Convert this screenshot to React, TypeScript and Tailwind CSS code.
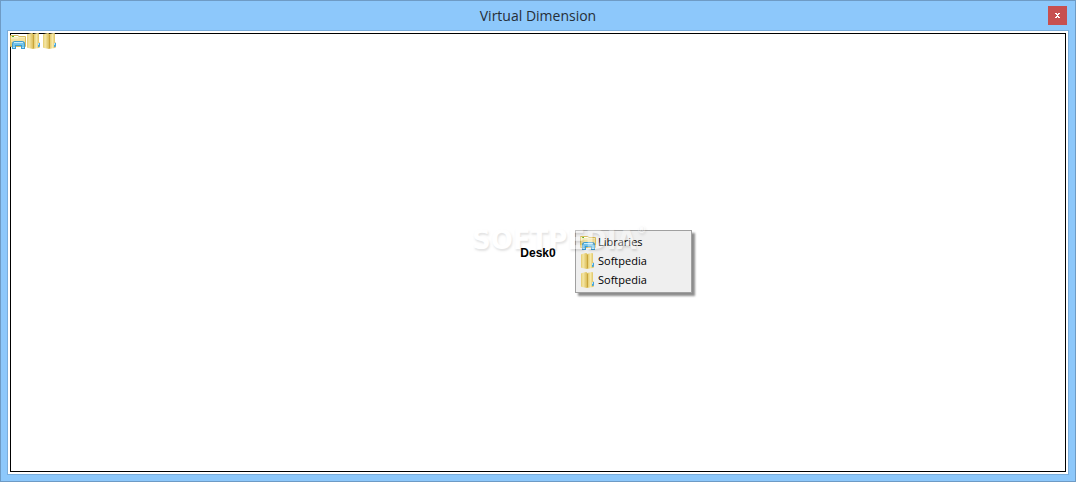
import React from "react";

type IconKind = "libraries" | "folder";

interface DesktopWindow {
  id: number;
  title: string;
  icon: IconKind;
}

const windows: DesktopWindow[] = [
  { id: 1, title: "Libraries", icon: "libraries" },
  { id: 2, title: "Softpedia", icon: "folder" },
  { id: 3, title: "Softpedia", icon: "folder" },
];

const LibrariesIcon: React.FC = () => (
  <svg viewBox="0 0 16 16" className="h-4 w-4 shrink-0" aria-hidden="true">
    <path d="M0 3q0-1 1-1h7l1 1h6q1 0 1 1v9q0 1-1 1H1q-1 0-1-1z" fill="#d9bd5c" />
    <path d="M1 3h7l1 1h6v2H1z" fill="#f5edbd" />
    <path d="M2 3h2v1H2z" fill="#4fb42b" />
    <path d="M4 3h4v1H4z" fill="#fffef0" />
    <path d="M1 6h7l1-1h6v8H1z" fill="#f3e2a0" />
    <path d="M1 9h14v4H1z" fill="#e8cf7a" />
    <path d="M2 16v-5q0-3 3-3h7q3 0 3 3v5h-4v-3H6v3z" fill="#3d9bd0" />
    <path d="M3 15v-4q0-2 2-2h7q2 0 2 2v4h-2v-3H5v3z" fill="#74c4ea" />
    <path d="M4 9h9v1H4z" fill="#c9edfb" />
    <path d="M3 14h2v1H3zM12 14h2v1h-2z" fill="#a9e2fa" />
  </svg>
);

const FolderIcon: React.FC = () => (
  <svg viewBox="0 0 16 16" className="h-4 w-4 shrink-0" aria-hidden="true">
    <defs>
      <linearGradient id="folder-back" x1="0" x2="1" y1="0" y2="0">
        <stop offset="0" stopColor="#dfc25c" />
        <stop offset="0.5" stopColor="#f6e9a8" />
        <stop offset="1" stopColor="#d6b64c" />
      </linearGradient>
      <linearGradient id="folder-front" x1="0" x2="1" y1="0" y2="0">
        <stop offset="0" stopColor="#e4ca6c" />
        <stop offset="0.3" stopColor="#f5e7a6" />
        <stop offset="1" stopColor="#d4b347" />
      </linearGradient>
    </defs>
    <path d="M7 1l5-1q1 0 1 1v8l1 1v4l-1 1-6 1z" fill="url(#folder-back)" />
    <path d="M1 2q0-1 1-1l4-1q1 0 1 1l1 1v13l-1 1-5-1q-1 0-1-1z" fill="url(#folder-front)" />
    <path d="M7 2h1v13H7z" fill="#c8a43a" />
    <path d="M12 10h2v3l-1 1h-1z" fill="#46a6dd" />
    <path d="M12 10h1v2h-1z" fill="#b4e2f6" />
  </svg>
);

const WindowIcon: React.FC<{ kind: IconKind }> = ({ kind }) =>
  kind === "libraries" ? <LibrariesIcon /> : <FolderIcon />;

const App: React.FC = () => {
  return (
    <div className="flex min-h-screen flex-col border border-[#6e9bc5] bg-[#8dc8fb] px-1.5 pb-1.5">
      <header className="grid h-[29px] grid-cols-[1fr_auto_1fr] items-center">
        <h1 className="col-start-2 font-['Open_Sans','Noto_Sans',sans-serif] text-[14px] leading-5 text-[#262f38]">
          Virtual Dimension
        </h1>
        <button
          type="button"
          aria-label="Close"
          className="mr-0.5 flex h-[19px] w-[19px] items-center justify-center justify-self-end bg-[#c75050]"
        >
          <svg viewBox="0 0 5 5" className="h-[5px] w-[5px]" shapeRendering="crispEdges" aria-hidden="true">
            <path d="M0 0h2v1h1V0h2v1H4v1H3v1h1v1h1v1H3V4H2v1H0V4h1V3h1V2H1V1H0z" fill="#fff" />
          </svg>
        </button>
      </header>

      <main className="flex flex-1 border border-[#7aaddb] bg-white p-0.5">
        <section className="relative flex flex-1 items-center justify-center border border-black">
          <div className="absolute -top-px -left-px flex">
            {windows.map((win) => (
              <button key={win.id} type="button" aria-label={win.title}>
                <WindowIcon kind={win.icon} />
              </button>
            ))}
          </div>

          <h2 className="font-['Liberation_Sans',Arial,sans-serif] text-[12px] leading-4 font-bold text-black">
            Desk0
          </h2>

          <ul className="absolute top-[calc(50%-23px)] left-[calc(50%+37px)] w-[117px] border border-[#a0a0a0] bg-[#efefef] py-0.5 shadow-[3px_3px_2px_rgba(0,0,0,0.45)]">
            {windows.map((win) => (
              <li key={win.id}>
                <button
                  type="button"
                  className="flex h-[19px] w-full items-center gap-0.5 px-1 text-left font-['Open_Sans','Noto_Sans',sans-serif] text-[11px] leading-4 text-black"
                >
                  <WindowIcon kind={win.icon} />
                  {win.title}
                </button>
              </li>
            ))}
          </ul>

          {/* watermark, sits above the menu but lets clicks through */}
          <div className="pointer-events-none absolute top-[calc(50%-29px)] left-[calc(50%-66px)] flex items-start font-['DejaVu_Sans',sans-serif] text-[26px] leading-8 font-bold text-white opacity-35 [text-shadow:1px_2px_2px_rgba(0,0,0,0.3)]">
            SOFTPEDIA
            <span className="text-[10px] leading-3">®</span>
          </div>
        </section>
      </main>
    </div>
  );
};

export default App;
